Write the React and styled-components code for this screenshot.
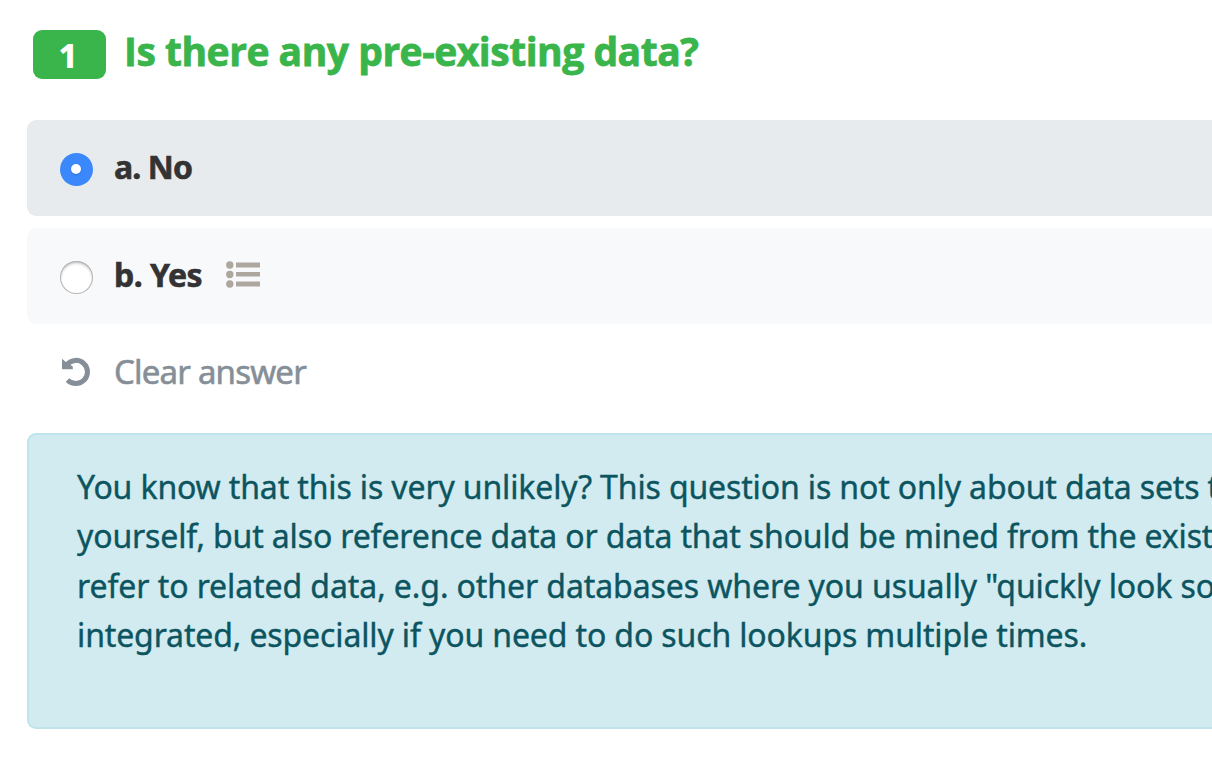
import React from 'react';
import styled, { createGlobalStyle } from 'styled-components';

const Global = createGlobalStyle`
  * { box-sizing: border-box; }
  body { margin: 0; background: #fff; overflow: hidden; font-family: "Noto Sans", "Open Sans", sans-serif; }
`;

const Page = styled.main`
  height: 760px;
  padding: 30px 0 0 27px;
  overflow: hidden;
`;
const Heading = styled.header`
  display: flex;
  height: 90px;
  padding-left: 6px;
  gap: 18px;
`;
const Badge = styled.span`
  width: 73px;
  height: 49px;
  border-radius: 9px;
  background: #3ab54b;
  color: #fff;
  font-size: 33px;
  font-weight: 800;
  line-height: 51px;
  padding-right: 3px;
  text-align: center;
`;
const Title = styled.h1`
  margin: 0;
  color: #3ab54b;
  font-family: "Open Sans", "Noto Sans", sans-serif;
  font-size: 39px;
  font-weight: 700;
  line-height: 41px;
  letter-spacing: ${p => p.$spacing}px;
  -webkit-text-stroke: 0.8px currentColor;
  white-space: nowrap;
`;
const Option = styled.label`
  display: flex;
  align-items: center;
  height: 96px;
  margin-bottom: 12px;
  padding-left: 33px;
  border-radius: 9px 0 0 9px;
  background: ${p => (p.$selected ? '#e7ebee' : '#f8f9fb')};
`;
const Radio = styled.span`
  display: flex;
  align-items: center;
  justify-content: center;
  width: 33px;
  height: 33px;
  margin: 2px 21px 0 0;
  padding-right: 1px;
  border-radius: 50%;
  background: ${p => (p.$selected ? '#3b88fd' : '#fff')};
  box-shadow: ${p => (p.$selected ? 'none' : 'inset 0 0 0 1px #b5b5b5, inset 0 2px 3px #bbb')};
  &::after {
    content: "";
    width: 10px;
    height: 10px;
    border-radius: 50%;
    background: ${p => (p.$selected ? '#fff' : 'transparent')};
    box-shadow: ${p => (p.$selected ? '0 1px 2px #2b6fd8' : 'none')};
  }
`;
const OptionText = styled.span`
  margin-top: -2px;
  color: #333;
  font-size: 32px;
  font-weight: 700;
  line-height: 48px;
  letter-spacing: ${p => p.$spacing}px;
  -webkit-text-stroke: 0.6px currentColor;
  white-space: nowrap;
`;
const ListIcon = styled.svg`
  width: 34px;
  height: 27px;
  margin: -3px 0 0 24px;
`;
const Clear = styled.button`
  display: flex;
  align-items: center;
  height: 72px;
  padding: 0 0 0 34px;
  border: 0;
  background: none;
  color: #868f97;
  font: 400 33px/48px "Noto Sans", sans-serif;
  gap: 23px;
  letter-spacing: ${p => p.$spacing}px;
  -webkit-text-stroke: 0.6px currentColor;
`;
const UndoIcon = styled.svg`
  width: 30px;
  height: 30px;
  stroke-width: 0;
`;
const Notice = styled.section`
  height: 296px;
  margin-top: 25px;
  padding: 27px 0 0 48px;
  border: 2px solid #bee5eb;
  border-right: 0;
  border-radius: 9px 0 0 9px;
  background: #d1ebf0;
  color: #0c5560;
`;
const Line = styled.div`
  font-size: 32px;
  line-height: 49.4px;
  letter-spacing: ${p => p.$spacing}px;
  -webkit-text-stroke: 0.4px currentColor;
  white-space: nowrap;
`;

export default function App() {
  return (
    <Page>
      <Global />
      <Heading>
        <Badge>1</Badge>
        <Title $spacing={-0.48}>Is there any pre-existing data?</Title>
      </Heading>
      <Option $selected>
        <Radio $selected />
        <OptionText $spacing={-0.9}>a. No</OptionText>
      </Option>
      <Option>
        <Radio />
        <OptionText $spacing={-0.5}>b. Yes</OptionText>
        <ListIcon viewBox="0 0 34 27" fill="#aea79f">
          <circle cx="3.8" cy="4" r="3.7" />
          <circle cx="3.8" cy="13.5" r="3.7" />
          <circle cx="3.8" cy="23" r="3.7" />
          <path d="M10 1.5h24v5H10zM10 11h24v4.5H10zM10 20.5h24v5H10z" />
        </ListIcon>
      </Option>
      <Clear $spacing={-0.8}>
        <UndoIcon viewBox="0 0 30 30" fill="none">
          <path d="M6 7.5A11.6 11.6 0 1 1 6.5 23" stroke="currentColor" strokeWidth="5" />
          <path d="M1 1.7L4.2 4.4L11.8 9.5V12.2H1.8Q1 12.2 1 11.4z" fill="currentColor" />
        </UndoIcon>
        Clear answer
      </Clear>
      <Notice>
        <Line $spacing={-0.135}>You know that this is very unlikely? This question is not only about data sets t</Line>
        <Line $spacing={-0.15}>yourself, but also reference data or data that should be mined from the exist</Line>
        <Line $spacing={-0.09}>refer to related data, e.g. other databases where you usually "quickly look so</Line>
        <Line $spacing={-0.13}>integrated, especially if you need to do such lookups multiple times.</Line>
      </Notice>
    </Page>
  );
}
